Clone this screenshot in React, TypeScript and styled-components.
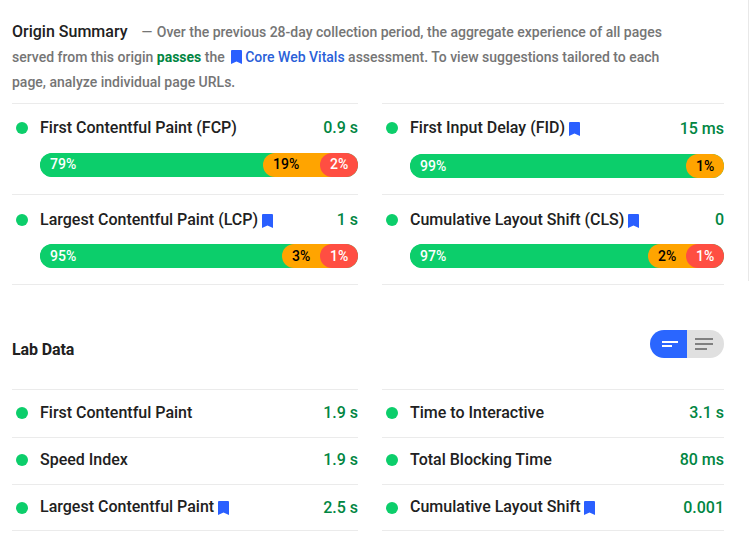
import React from "react";
import styled, { createGlobalStyle } from "styled-components";

const Global = createGlobalStyle`
  html, body { margin: 0; padding: 0; background: #fff; overflow: hidden; }
  body { font-family: Roboto, "Liberation Sans", sans-serif; }
`;

const Page = styled.div`
  width: 749px;
  height: 539px;
  box-sizing: border-box;
  padding: 19px 25px 0 12px;
  overflow: hidden;
  position: relative;
`;

const EdgeLine = styled.div`
  position: absolute;
  top: 0;
  right: 0;
  width: 1px;
  height: 281px;
  background: #e8e8e8;
`;

const Intro = styled.p`
  margin: 0 0 9px;
  width: 680px;
  height: 75px;
  font-size: 14px;
  line-height: 25px;
  font-weight: 500;
  color: #757575;
`;

const IntroTitle = styled.span`
  font-size: 16px;
  font-weight: 500;
  color: #212121;
  margin-right: 14px;
`;

const Dash = styled.span`
  margin-right: 1px;
`;

const Passes = styled.span`
  color: #018642;
  font-weight: 700;
`;

const CwvLink = styled.span`
  color: #2a5fd8;
  margin-left: 3px;
`;

const Columns = styled.div`
  display: grid;
  grid-template-columns: 346px 342px;
  column-gap: 24px;
`;

const Column = styled.div`
  display: flex;
  flex-direction: column;
  border-top: 1px solid #ebebeb;
`;

const FieldCell = styled.div<{ $height: number; $low?: boolean }>`
  height: ${(p) => p.$height}px;
  box-sizing: border-box;
  padding-top: ${(p) => (p.$low ? 15 : 14)}px;
  border-bottom: 1px solid #ebebeb;
`;

const HeaderRow = styled.div`
  display: flex;
  align-items: center;
  height: 20px;
`;

const Dot = styled.span<{ $drop?: boolean }>`
  flex: none;
  width: 12px;
  height: 12px;
  margin: ${(p) => (p.$drop ? 1 : 0)}px 12px 0 4px;
  border-radius: 50%;
  background: #0cce6b;
`;

const Label = styled.span<{ $raise?: boolean }>`
  flex: 1;
  display: flex;
  align-items: center;
  margin-bottom: ${(p) => (p.$raise ? 1 : 0)}px;
  font-size: 16px;
  line-height: 20px;
  font-weight: 500;
  color: #212121;
  white-space: nowrap;
`;

const Value = styled.span<{ $drop?: boolean }>`
  margin-top: ${(p) => (p.$drop ? 1 : 0)}px;
  font-size: 16px;
  line-height: 20px;
  font-weight: 500;
  color: #018642;
  white-space: nowrap;
`;

const Bar = styled.div<{ $gap: number }>`
  display: flex;
  height: 24px;
  margin: ${(p) => p.$gap}px 0 0 28px;
  border-radius: 12px;
  overflow: hidden;
  background: #0cce6b;
`;

const Segment = styled.div<{ $color: string; $text: string; $tight?: boolean }>`
  flex: none;
  box-sizing: border-box;
  height: 24px;
  margin-left: -12px;
  padding-left: 10px;
  border-radius: 12px 0 0 12px;
  background: ${(p) => p.$color};
  color: ${(p) => p.$text};
  font-size: 14px;
  line-height: ${(p) => (p.$tight ? 23 : 24)}px;
  font-weight: 500;
  &:first-child {
    margin-left: 0;
  }
`;

const LabHeader = styled.div`
  display: flex;
  align-items: center;
  justify-content: space-between;
  height: 104px;
  box-sizing: border-box;
  padding-top: 24px;
`;

const LabTitle = styled.h2`
  margin: 0;
  font-size: 16px;
  font-weight: 700;
  letter-spacing: -0.1px;
  color: #212121;
`;

const Toggle = styled.div`
  display: flex;
  width: 74px;
  height: 28px;
  margin-bottom: 10px;
  border-radius: 14px;
  overflow: hidden;
`;

const ToggleHalf = styled.div<{ $active: boolean }>`
  display: flex;
  align-items: center;
  justify-content: center;
  box-sizing: border-box;
  width: 37px;
  padding: ${(p) => (p.$active ? "0 0 0 3px" : "0 3px 0 0")};
  background: ${(p) => (p.$active ? "#2a66ff" : "#e0e0e0")};
`;

const LabRow = styled.div<{ $height: number; $lift?: boolean }>`
  display: flex;
  align-items: center;
  height: ${(p) => p.$height}px;
  box-sizing: border-box;
  padding-bottom: ${(p) => (p.$lift ? 2 : 0)}px;
  border-bottom: 1px solid #ebebeb;
`;

const Mark = styled.svg`
  flex: none;
  margin-left: 4px;
  margin-top: 2px;
`;

const InlineMark = styled.svg`
  margin-right: 3px;
  vertical-align: -2px;
`;

const bookmarkPath = "M1 0h9a1 1 0 0 1 1 1v13l-5.5-2.4L0 14V1a1 1 0 0 1 1-1z";

const Bookmark = () => (
  <Mark width="11" height="14" viewBox="0 0 11 14">
    <path d={bookmarkPath} fill="#2a5fff" />
  </Mark>
);

const GREEN = "#0cce6b";
const ORANGE = "#ffa400";
const RED = "#ff4e42";

type Part = [string, number];

const FieldBar = ({ a, b, c, gap, tight }: { a: Part; b: Part; c?: Part; gap: number; tight?: boolean }) => (
  <Bar $gap={gap}>
    <Segment $tight={tight} $color={GREEN} $text="#fff" style={{ width: a[1] }}>{a[0]}</Segment>
    <Segment $tight={tight} $color={ORANGE} $text="#000" style={{ width: b[1] }}>{b[0]}</Segment>
    {c && <Segment $tight={tight} $color={RED} $text="#fff" style={{ width: c[1] }}>{c[0]}</Segment>}
  </Bar>
);

const Field = ({ label, value, mark, low, dropValue, children, height }: { label: string; value: string; mark?: boolean; low?: boolean; dropValue?: boolean; children: React.ReactNode; height: number }) => (
  <FieldCell $height={height} $low={low}>
    <HeaderRow>
      <Dot />
      <Label>{label}{mark && <Bookmark />}</Label>
      <Value $drop={dropValue}>{value}</Value>
    </HeaderRow>
    {children}
  </FieldCell>
);

const Lab = ({ label, value, mark, height }: { label: string; value: string; mark?: boolean; height: number }) => (
  <LabRow $height={height} $lift={!mark}>
    <Dot $drop={mark} />
    <Label $raise={mark}>{label}{mark && <Bookmark />}</Label>
    <Value>{value}</Value>
  </LabRow>
);

export default function App() {
  return (
    <Page>
      <Global />
      <EdgeLine />
      <Intro>
        <IntroTitle>Origin Summary</IntroTitle><Dash>—</Dash> Over the previous 28-day collection period, the aggregate experience of all pages
        served from this origin <Passes>passes</Passes> the{" "}
        <CwvLink>
          <InlineMark width="11" height="14" viewBox="0 0 11 14">
            <path d={bookmarkPath} fill="#2a5fff" />
          </InlineMark>
          Core Web Vitals
        </CwvLink>{" "}
        assessment. To view suggestions tailored to each page, analyze individual page URLs.
      </Intro>
      <Columns>
        <Column>
          <Field label="First Contentful Paint (FCP)" value="0.9 s" height={91}>
            <FieldBar gap={15} tight a={["79%", 235]} b={["19%", 69]} c={["2%", 38]} />
          </Field>
          <Field label="Largest Contentful Paint (LCP)" value="1 s" mark low height={90}>
            <FieldBar gap={14} a={["95%", 254]} b={["3%", 50]} c={["1%", 38]} />
          </Field>
        </Column>
        <Column>
          <Field label="First Input Delay (FID)" value="15 ms" mark dropValue height={91}>
            <FieldBar gap={16} a={["99%", 288]} b={["1%", 38]} />
          </Field>
          <Field label="Cumulative Layout Shift (CLS)" value="0" mark low height={90}>
            <FieldBar gap={14} a={["97%", 250]} b={["2%", 50]} c={["1%", 38]} />
          </Field>
        </Column>
      </Columns>
      <LabHeader>
        <LabTitle>Lab Data</LabTitle>
        <Toggle>
          <ToggleHalf $active>
            <svg width="16" height="6" viewBox="0 0 16 6">
              <path d="M0 0h16v2H0zM0 4h10v2H0z" fill="#fff" />
            </svg>
          </ToggleHalf>
          <ToggleHalf $active={false}>
            <svg width="18" height="12" viewBox="0 0 18 12">
              <path d="M0 0h18v2H0zM0 5h18v2H0zM0 10h12v2H0z" fill="#808080" />
            </svg>
          </ToggleHalf>
        </Toggle>
      </LabHeader>
      <Columns>
        <Column>
          <Lab label="First Contentful Paint" value="1.9 s" height={48} />
          <Lab label="Speed Index" value="1.9 s" height={47} />
          <Lab label="Largest Contentful Paint" value="2.5 s" mark height={46} />
        </Column>
        <Column>
          <Lab label="Time to Interactive" value="3.1 s" height={48} />
          <Lab label="Total Blocking Time" value="80 ms" height={47} />
          <Lab label="Cumulative Layout Shift" value="0.001" mark height={46} />
        </Column>
      </Columns>
    </Page>
  );
}
